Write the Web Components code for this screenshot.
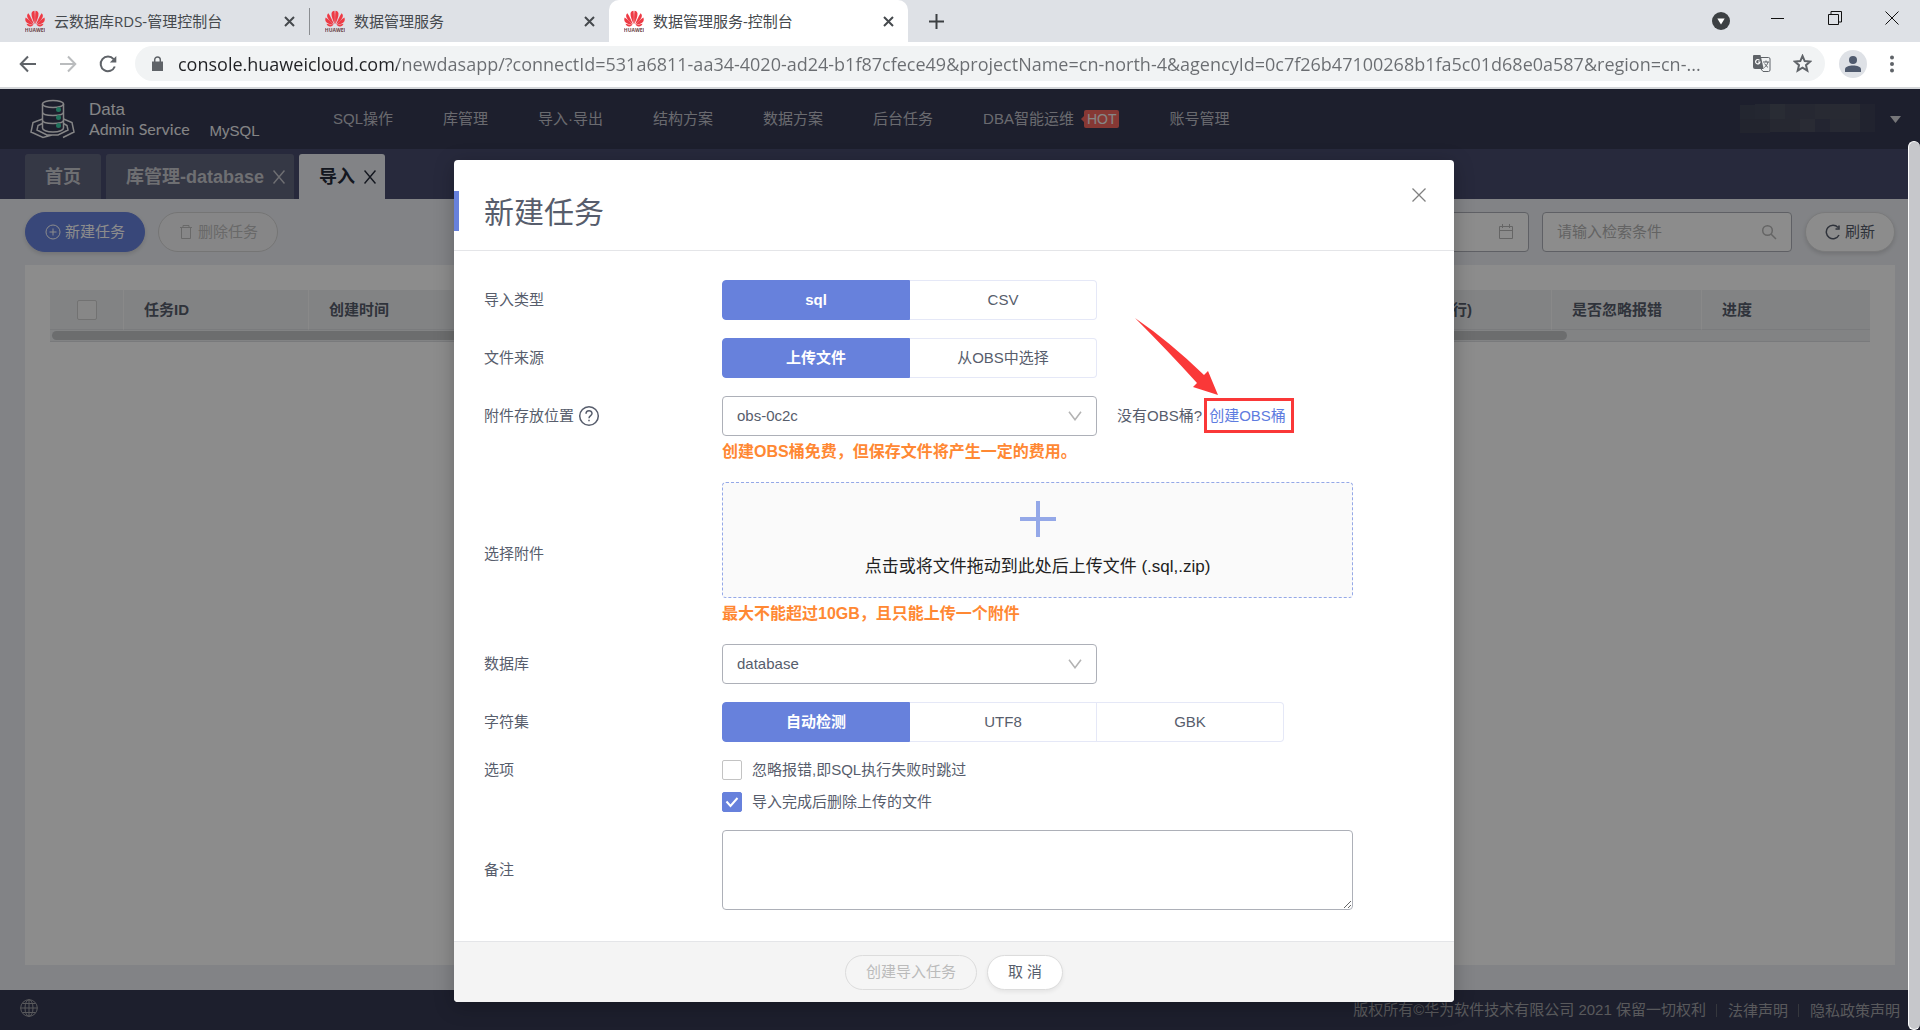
<!DOCTYPE html>
<html lang="zh-CN">
<head>
<meta charset="utf-8">
<title>数据管理服务-控制台</title>
<style>
  html, body { height: 100%; }
  body { margin: 0; overflow: hidden; font: 15px/20px "Liberation Sans", "Noto Sans CJK SC", sans-serif; }
</style>
</head>
<body>
<browser-window></browser-window>

<script>
const BASE = `<style>
  *, *::before, *::after { box-sizing: border-box; }
  button, input, select, textarea { font: inherit; color: inherit; margin: 0; }
  button { border: 0; padding: 0; background: none; display: flex; align-items: center; justify-content: center; }
  a { color: inherit; text-decoration: none; }
  svg { display: block; flex: none; }
  svg:not([fill]) { fill: none; }
  svg:not([stroke]) { stroke: currentColor; }
</style>`;

function define(name, html) {
  customElements.define(name, class extends HTMLElement {
    constructor() {
      super();
      this.attachShadow({ mode: 'open' }).innerHTML = BASE + html;
    }
  });
}

/* Eight-petal emblem used as the favicon of every tab */
define('huawei-mark', `
<style>:host { display: block; flex: none; }</style>
<svg width="20" height="22" viewBox="0 0 20 22" stroke="none" aria-hidden="true">
  <g fill="#ee3b45">
    <path d="M9.6 14.2C8 10.500 6.300 6.600 6.500 3.600 6.600 1.800 8 .8 9.500.7 10 5 10 9.500 9.600 14.200z"/>
    <path d="M10.400 14.200C12 10.500 13.700 6.600 13.500 3.600 13.400 1.800 12 .8 10.500.7 10 5 10 9.500 10.400 14.200z"/>
    <path d="M8.900 14.500C7.500 10.500 5.500 6.500 3.400 3.200 1.800 4.500 1.800 6.500 2.900 8.300 4.300 10.500 6.500 12.600 8.900 14.500z"/>
    <path d="M11.100 14.500C12.500 10.500 14.500 6.500 16.600 3.200 18.200 4.500 18.200 6.500 17.100 8.300 15.700 10.500 13.500 12.600 11.100 14.500z"/>
    <path d="M8.500 15C6.500 12.200 3.500 9.500.6 7.600-.1 9.600.3 11.700 2.300 13 4 14.100 6.200 14.600 8.500 15z"/>
    <path d="M11.500 15C13.500 12.200 16.500 9.500 19.400 7.600 20.100 9.600 19.700 11.700 17.700 13 16 14.100 13.800 14.600 11.500 15z"/>
    <path d="M8.300 15.500C6 14.900 3.800 14.300 1.500 13.800 2.300 15.800 3.800 16.700 5.600 16.400 6.600 16.200 7.500 15.900 8.300 15.500z"/>
    <path d="M11.700 15.500C14 14.900 16.200 14.300 18.500 13.800 17.700 15.800 16.200 16.700 14.400 16.400 13.400 16.200 12.500 15.900 11.700 15.500z"/>
  </g>
  <text x="10" y="21.500" font-size="5" font-weight="700" text-anchor="middle" fill="#6b4348">HUAWEI</text>
</svg>`);

define('browser-tab', `
<style>
  :host { display: flex; align-items: center; gap: 9px; width: 299px; height: 42px; padding: 0 12px 0 15px; color: #45494d; font: 15px/20px "Open Sans", "Noto Sans CJK SC", sans-serif; box-sizing: border-box; }
  :host([first]) { width: 310px; padding-left: 25px; border-right: 1px solid #8a8d91; border-image: linear-gradient(#0000 9px, #8a8d91 9px, #8a8d91 34px, #0000 34px) 1; }
  :host([active]) { background: #fff; border-radius: 10px 10px 0 0; }
  .title { flex: 1; white-space: nowrap; }
  button { width: 16px; height: 16px; }
</style>
<huawei-mark></huawei-mark>
<span class="title"><slot></slot></span>
<button aria-label="关闭标签页"><svg width="11" height="11" viewBox="0 0 11 11" stroke-width="2"><path d="M1 1l9 9M10 1l-9 9"/></svg></button>`);

define('browser-tabs', `
<style>
  :host { display: flex; align-items: center; height: 42px; background: #dee1e6; color: #3c4043; }
  .new { width: 28px; height: 28px; margin-left: 14px; }
  .sys { margin-left: auto; display: flex; align-items: center; color: #111; }
  .sys button { width: 57px; height: 42px; }
  .sys button:nth-child(n+2) { height: 36px; align-self: flex-start; }
</style>
<browser-tab first>云数据库RDS-管理控制台</browser-tab>
<browser-tab>数据管理服务</browser-tab>
<browser-tab active>数据管理服务-控制台</browser-tab>
<button class="new" aria-label="新标签页"><svg width="15" height="15" viewBox="0 0 15 15" stroke-width="2"><path d="M7.500 0v15M0 7.500h15"/></svg></button>
<div class="sys">
  <button aria-label="标签页搜索"><svg width="18" height="18" viewBox="0 0 18 18" stroke="none"><circle cx="9" cy="9" r="9" fill="#3c4043"/><path d="M5.300 6.500h7.400L9 12.500z" fill="#fff"/></svg></button>
  <button aria-label="最小化"><svg width="13" height="13" viewBox="0 0 13 13"><path d="M0 6.500h13"/></svg></button>
  <button aria-label="还原"><svg width="14" height="14" viewBox="0 0 14 14"><path d="M.5 3.500h10v10H.5zM3 3.500v-3h10.500v10.500h-3"/></svg></button>
  <button aria-label="关闭"><svg width="14" height="14" viewBox="0 0 14 14"><path d="M.5.5l13 13M13.500.5l-13 13"/></svg></button>
</div>`);

define('browser-toolbar', `
<style>
  :host { display: flex; align-items: center; height: 47px; padding: 0 18px 2px 19px; background: #fff; border-bottom: 2px solid #d5d7da; color: #5f6368; box-sizing: border-box; }
  .nav { width: 18px; height: 18px; margin-right: 22px; }
  .nav.off { color: #babcbe; }
  .omni { flex: 1; display: flex; align-items: center; height: 35px; margin: 0 14px 0 -4px; padding: 0 13px 0 17px; border-radius: 18px; background: #f1f3f4; min-width: 0; }
  input { flex: 1; min-width: 0; height: 35px; margin: 0 20px 0 15px; padding: 0; border: 0; outline: 0; font: 18px "Open Sans", sans-serif; color: #0000; background: linear-gradient(90deg, #202124 219px, #6a6d71 219px); -webkit-background-clip: text; background-clip: text; }
  .omni button + button { margin-left: 22px; }
  .me { width: 28px; height: 28px; border-radius: 50%; background: #dee1e6; margin-right: 15px; }
</style>
<button class="nav" aria-label="后退"><svg width="18" height="18" viewBox="0 0 18 18" stroke-width="2"><path d="M17 9H2M9 1.500L1.700 9 9 16.500"/></svg></button>
<button class="nav off" aria-label="前进"><svg width="18" height="18" viewBox="0 0 18 18" stroke-width="2"><path d="M1 9h15M9 1.500L16.300 9 9 16.500"/></svg></button>
<button class="nav" aria-label="重新加载"><svg width="18" height="18" viewBox="0 0 18 18" stroke-width="2"><path d="M15.800 11.500A7.300 7.300 0 1 1 14.600 4.200"/><path d="M17.300 1v6.500h-6.500z" fill="#5f6368" stroke="none"/></svg></button>
<div class="omni">
  <svg width="11" height="15" viewBox="0 0 11 15"><path d="M0 5.500h11V15H0z" fill="#5f6368" stroke="none"/><path d="M2.700 6V3.700a2.800 2.800 0 0 1 5.600 0V6" stroke-width="1.500"/></svg>
  <input type="text" aria-label="地址栏" value="console.huaweicloud.com/newdasapp/?connectId=531a6811-aa34-4020-ad24-b1f87cfece49&amp;projectName=cn-north-4&amp;agencyId=0c7f26b47100268b1fa5c01d68e0a587&amp;region=cn-...">
  <button aria-label="翻译此页"><svg width="19" height="19" viewBox="0 0 19 19"><path d="M1.500 1h7l3.200 14H3a2 2 0 0 1-2-2V1.500z" fill="#5f6368" stroke="none"/><path d="M8.500 3.500h8a1.500 1.500 0 0 1 1.500 1.500v11a1.500 1.500 0 0 1-1.500 1.500H11L9 15"/><path d="M7.500 6.300A2.200 2.200 0 1 0 8 8H6" stroke="#fff" stroke-width="1.200"/><path d="M11 8h6M14 6.500V8M16 8c-.6 2.500-2 4.300-3.700 5.500M12.600 9.500c.8 1.600 1.900 2.900 3.400 3.900"/></svg></button>
  <button aria-label="收藏"><svg width="19" height="19" viewBox="0 0 19 19" stroke-width="2"><path d="M9.500 2l2.200 5.100 5.500.5-4.200 3.600 1.300 5.400-4.800-2.900-4.800 2.900L6 11.200 1.800 7.600l5.500-.5z"/></svg></button>
</div>
<button class="me" aria-label="账户"><svg width="18" height="18" viewBox="0 0 18 18" stroke="none" fill="#4f5a6e"><circle cx="9" cy="5" r="4"/><path d="M1 17v-2.500C1 11.500 5 10.500 9 10.500s8 1 8 4V17z"/></svg></button>
<button aria-label="菜单"><svg width="20" height="18" viewBox="0 0 20 18" fill="#5f6368" stroke="none"><circle cx="10" cy="2.500" r="2"/><circle cx="10" cy="9" r="2"/><circle cx="10" cy="15.500" r="2"/></svg></button>`);

define('das-header', `
<style>
  :host { display: flex; align-items: center; height: 60px; padding: 0 19px 0 30px; background: #353952; color: #c1c2cb; }
  .brand { display: flex; align-items: center; color: #f2f2f4; width: 303px; }
  .name { margin-left: 14px; display: flex; flex-direction: column; font-size: 17px; line-height: 19px; white-space: nowrap; }
  .name span { font-family: Lato, sans-serif; font-size: 16px; }
  .engine { margin: 24px 0 0 20px; font-size: 15px; }
  nav { display: flex; align-items: center; gap: 50px; white-space: nowrap; }
  .hot { display: flex; align-items: center; gap: 10px; }
  em { position: relative; height: 18px; padding: 0 3px; border-radius: 2px; background: #f5675f; color: #f4f4f4; font: 14px/18px "Liberation Sans", sans-serif; }
  em::before { content: ""; position: absolute; left: -3px; top: 6px; border: 3px solid #0000; border-right-color: #f5675f; border-left: 0; }
  .user { margin-left: auto; gap: 15px; }
</style>
<div class="brand">
  <svg width="45" height="40" viewBox="0 0 45 40" stroke-width="1.500" aria-hidden="true">
    <ellipse cx="23" cy="5" rx="10.500" ry="3.500"/>
    <path d="M12.500 5v24c0 2 4 4 10.500 4s10.500-2 10.500-4V5M12.500 13c0 2 4 3.500 10.500 3.500S33.500 15 33.500 13M12.500 21c0 2 4 3.500 10.500 3.500S33.500 23 33.500 21"/>
    <path d="M12.500 20L3 23.500 1 33l12 5.500L22 36M33.500 20l8.500 3.500 2 9.500-11 5.500M12.500 24.500L8 26.500 7 31l10 5h11l10-5-1-4.500-3.500-2"/>
    <g fill="#3fd2a9" stroke="none"><circle cx="28.500" cy="10.500" r="2.500"/><circle cx="28.500" cy="18.500" r="2.500"/><circle cx="28.500" cy="26.500" r="2.500"/></g>
  </svg>
  <div class="name">Data<span>Admin Service</span></div>
  <span class="engine">MySQL</span>
</div>
<nav>
  <a href="#sql">SQL操作</a><a href="#db">库管理</a><a href="#io">导入·导出</a><a href="#schema">结构方案</a><a href="#data">数据方案</a><a href="#jobs">后台任务</a>
  <a href="#dba" class="hot">DBA智能运维<em>HOT</em></a><a href="#account">账号管理</a>
</nav>
<button class="user" aria-label="用户菜单">
  <svg width="135" height="30" viewBox="0 0 135 30" stroke="none" shape-rendering="crispEdges" aria-hidden="true">
    <path d="M0 1h15v14H0z" fill="#414558"/><path d="M15 0h15v15H15z" fill="#434759"/><path d="M30 0h15v15H30z" fill="#4c5060"/><path d="M45 0h30v15H45z" fill="#464a5b"/><path d="M75 0h45v15H75z" fill="#4a4d5d"/><path d="M120 0h15v28h-15z" fill="#3c4056"/>
    <path d="M0 15h30v14H0z" fill="#3e4254"/><path d="M30 15h30v13H30z" fill="#464a5a"/><path d="M60 15h15v13H60z" fill="#4b4f60"/><path d="M75 15h15v13H75z" fill="#404459"/><path d="M90 15h30v13H90z" fill="#484b5d"/>
  </svg>
  <svg width="11" height="7" viewBox="0 0 11 7" fill="#d8d8dc" stroke="none"><path d="M0 0h11L5.500 7z"/></svg>
</button>`);

define('page-tab', `
<style>
  :host { display: flex; align-items: center; gap: 9px; height: 45px; padding: 0 20px; border-radius: 3px 3px 0 0; background: #62667f; color: #c9cad0; font-size: 18px; font-weight: 700; white-space: nowrap; }
  :host([closable]) { padding-right: 9px; }
  :host([active]) { background: #edeff4; color: #252b3a; }
  button { display: none; }
  :host([closable]) button { display: flex; }
</style>
<slot></slot><button aria-label="关闭"><svg width="12" height="14" viewBox="0 0 12 14" stroke-width="1.500"><path d="M.5.5l11 13M11.500.5l-11 13"/></svg></button>`);

define('page-tabs', `
<style>:host { display: flex; align-items: flex-end; gap: 5px; height: 50px; padding: 0 25px; background: #474b6d; }</style>
<page-tab>首页</page-tab><page-tab closable>库管理-database</page-tab><page-tab closable active>导入</page-tab>`);

define('task-toolbar', `
<style>
  :host { display: flex; align-items: center; gap: 13px; color: #575d6c; }
  button { height: 40px; padding: 0 19px; gap: 4px; border: 1px solid #dedfe0; border-radius: 20px; background: #fff; box-shadow: 0 2px 4px #0002; white-space: nowrap; }
  .primary { background: #6781dc; border-color: #6781dc; color: #fff; }
  button:disabled { background: #f5f5f6; color: #bfbfbf; box-shadow: none; border-color: #d5d5d5; }
  .box { display: flex; align-items: center; width: 250px; height: 40px; padding: 0 14px; border: 1px solid #adb0b8; border-radius: 4px; background: #fff; color: #b8b8b8; }
  .box:first-of-type { margin-left: auto; }
  .box input { flex: 1; min-width: 0; border: 0; padding: 0; background: none; outline: 0; }
  .box input::placeholder { color: #b5b5b5; }
</style>
<button class="primary"><svg width="16" height="16" viewBox="0 0 16 16"><circle cx="8" cy="8" r="7"/><path d="M8 4.500v7M4.500 8h7"/></svg>新建任务</button>
<button disabled><svg width="16" height="16" viewBox="0 0 16 16"><path d="M2 3.500h12M5 3V1.500h6V3M3.500 4v10.500h9V4"/></svg>删除任务</button>
<label class="box"><input type="text" aria-label="日期范围"><svg width="16" height="16" viewBox="0 0 16 16"><path d="M1.500 2.500h13v12h-13zM1.500 6.500h13M4.500 0v4M11.500 0v4"/></svg></label>
<label class="box"><input type="text" aria-label="检索条件" placeholder="请输入检索条件"><svg width="16" height="16" viewBox="0 0 16 16" stroke-width="1.500"><circle cx="6.500" cy="6.500" r="4.800"/><path d="M10 10l5 5"/></svg></label>
<button><svg width="16" height="16" viewBox="0 0 16 16" stroke-width="1.500"><path d="M14 11A6.700 6.700 0 1 1 13 3.500M14 1.500V5h-3.500"/></svg>刷新</button>`);

define('task-table', `
<style>
  :host { display: block; border-bottom: 1px solid #dcdee2; background: #edeff1; }
  table { width: 100%; border-collapse: separate; border-spacing: 0; table-layout: fixed; }
  th { height: 40px; padding: 0 20px; text-align: left; white-space: nowrap; color: #575d6c; background: #edeff1; border-right: 1px solid #fafafa; border-bottom: 1px solid #dfe1e4; }
  th:first-child { text-align: center; }
  th:last-child { border-right: 0; }
  input { appearance: none; display: block; width: 20px; height: 20px; margin: 0 auto; border: 1px solid #cfcfcf; border-radius: 2px; background: #f6f6f6; }
  .bar { height: 11px; padding: 1px 2px; }
  .thumb { height: 9px; width: 83.4%; border-radius: 5px; background: #c5c6c9; }
</style>
<table>
  <colgroup><col style="width:74px"><col style="width:185px"><col><col style="width:125px"><col style="width:150px"><col style="width:168px"></colgroup>
  <thead><tr><th><input type="checkbox" aria-label="全选"></th><th>任务ID</th><th>创建时间</th><th>(行)</th><th>是否忽略报错</th><th>进度</th></tr></thead>
</table>
<div class="bar"><div class="thumb"></div></div>`);

define('das-footer', `
<style>
  :host { display: flex; align-items: center; height: 40px; padding: 0 20px; background: #353952; color: #a3a3a8; }
  svg { margin-bottom: 5px; }
  p { display: flex; align-items: center; margin: 0 0 0 auto; white-space: nowrap; }
  a { margin-left: 10px; padding-left: 11px; border-left: 1px solid #62646f; line-height: 13px; }
</style>
<svg width="18" height="18" viewBox="0 0 18 18" aria-label="语言"><circle cx="9" cy="9" r="8.300"/><ellipse cx="9" cy="9" rx="4" ry="8.300"/><path d="M9 .7v16.600M.7 9h16.600M2.500 4.500h13M2.500 13.500h13"/></svg>
<p>版权所有©华为软件技术有限公司 2021 保留一切权利<a href="#law">法律声明</a><a href="#privacy">隐私政策声明</a></p>`);

define('das-app', `
<style>
  :host { display: flex; flex-direction: column; position: relative; flex: 1; min-height: 0; background: #edeff4; }
  main { flex: 1; display: flex; flex-direction: column; gap: 13px; padding: 13px 25px 25px; }
  section { flex: 1; padding: 25px; background: #fff; }
  .mask { position: absolute; inset: 0; display: flex; justify-content: center; align-items: flex-start; padding: 71px 12px 0 0; background: rgba(0, 0, 0, .45); }
  .scroll { position: absolute; right: 0; top: 52px; bottom: 0; width: 12px; border: 1px solid #fff; border-width: 1px 0 1px 1px; border-radius: 6px; background: #c6c7cb; }
</style>
<das-header></das-header>
<page-tabs></page-tabs>
<main>
  <task-toolbar></task-toolbar>
  <section><task-table></task-table></section>
</main>
<das-footer></das-footer>
<div class="mask"><import-dialog></import-dialog></div>
<div class="scroll"></div>`);

/* One labelled line of the form; "top" keeps the label on the first control's line */
define('form-row', `
<style>
  :host { display: flex; align-items: center; }
  .label { flex: none; width: 238px; display: flex; align-items: center; }
  .control { flex: 1; min-width: 0; }
  :host([top]) { align-items: flex-start; }
  :host([top]) .label { min-height: var(--line, 40px); }
</style>
<div class="label"><slot name="label"></slot></div><div class="control"><slot></slot></div>`);

define('import-dialog', `
<style>
  :host { display: block; width: 1000px; border-radius: 4px; background: #fff; color: #575d6c; box-shadow: 0 4px 20px rgba(0, 0, 0, .25); }
  header { display: flex; align-items: center; height: 91px; border-bottom: 1px solid #e4e5e8; }
  h2 { flex: 1; height: 40px; margin: 12px 0 0; padding-left: 25px; border-left: 5px solid #6781dc; font-size: 30px; line-height: 44px; font-weight: 400; }
  header button { margin: 0 28px 20px 0; color: #808080; }
  form { display: flex; flex-direction: column; gap: 18px; padding: 29px 30px 31px; }
  .seg { display: flex; width: max-content; }
  .seg label { display: flex; align-items: center; justify-content: center; width: 187px; height: 40px; border: 1px solid #e5e8f7; border-left-width: 0; background: #fff; }
  .seg label:first-child { width: 188px; border-left-width: 1px; border-radius: 4px 0 0 4px; }
  .seg label:last-child { border-radius: 0 4px 4px 0; }
  .seg label:has(:checked) { background: #6781dc; border-color: #6781dc; color: #fff; font-weight: 700; }
  .seg input, .drop input { appearance: none; position: absolute; width: 0; height: 0; opacity: 0; }
  .line { display: flex; align-items: center; gap: 20px; white-space: nowrap; }
  .pick { display: flex; align-items: center; width: 375px; }
  select { appearance: none; width: 375px; height: 40px; padding: 0 14px; border: 1px solid #adb0b8; border-radius: 4px; background: #fff; }
  .pick svg { margin-left: -29px; color: #b3b3b3; pointer-events: none; }
  .help { margin-left: 4px; }
  .hint { height: 28px; margin: 0; font-size: 16px; line-height: 32px; font-weight: 700; color: #ff8833; white-space: nowrap; }
  .link { position: relative; color: #5e7ce0; margin-left: 3px; }
  .link::after { content: ""; position: absolute; inset: -9px -8px -9px -5px; border: 3px solid #fa3838; }
  .link svg { position: absolute; right: 67px; bottom: 28px; }
  .drop { display: flex; flex-direction: column; align-items: center; gap: 17px; width: 631px; height: 116px; padding-top: 18px; border: 1px dashed #94a8e8; border-radius: 4px; background: #fafafa; color: #222; font-size: 17px; line-height: 26px; }
  .opts { display: flex; flex-direction: column; gap: 12px; }
  .opts label { display: flex; align-items: center; gap: 10px; line-height: 20px; }
  .opts input { appearance: none; width: 20px; height: 20px; border: 1px solid #c3c3c3; border-radius: 2px; background: #fff; }
  .tick { display: grid; }
  .tick > * { grid-area: 1 / 1; place-self: center; }
  .tick svg { color: #fff; }
  .opts input:checked { background: #6781dc; border-color: #6781dc; }
  textarea { display: block; width: 631px; height: 80px; border: 1px solid #adb0b8; border-radius: 4px; background: #fff; }
  footer { display: flex; align-items: center; justify-content: center; gap: 10px; height: 61px; border-top: 1px solid #e4e5e8; border-radius: 0 0 4px 4px; background: #f4f4f4; }
  footer button { height: 35px; padding: 0 20px; border: 1px solid #dcdcdc; border-radius: 18px; background: #fff; box-shadow: 0 2px 4px #0001; }
  footer button:disabled { background: #f5f5f5; color: #bbb; box-shadow: none; }
</style>
<header>
  <h2>新建任务</h2>
  <button aria-label="关闭"><svg width="14" height="14" viewBox="0 0 14 14" stroke-width="1.300"><path d="M.5.5l13 13M13.500.5l-13 13"/></svg></button>
</header>
<form>
  <form-row><span slot="label">导入类型</span>
    <div class="seg" role="radiogroup" aria-label="导入类型">
      <label><input type="radio" name="type" checked>sql</label><label><input type="radio" name="type">CSV</label>
    </div>
  </form-row>
  <form-row><span slot="label">文件来源</span>
    <div class="seg" role="radiogroup" aria-label="文件来源">
      <label><input type="radio" name="source" checked>上传文件</label><label><input type="radio" name="source">从OBS中选择</label>
    </div>
  </form-row>
  <form-row top>
    <label slot="label" for="bucket">附件存放位置</label>
    <svg slot="label" class="help" width="22" height="22" viewBox="0 0 22 22" stroke-width="1.500" aria-hidden="true"><circle cx="11" cy="11" r="9.300"/><path d="M8 8.800c0-4 6-4 6-.3 0 2-3 2.200-3 4.700"/><path d="M11 14.800v1.500"/></svg>
    <div class="line">
      <div class="pick"><select id="bucket"><option>obs-0c2c</option></select><svg width="14" height="10" viewBox="0 0 14 10" stroke-width="1.500"><path d="M1 .8l6 8 6-8"/></svg></div>
      <span>没有OBS桶? <a class="link" href="#create">创建OBS桶<svg width="84" height="78" viewBox="0 0 84 78" fill="#fa3838" stroke="none" aria-hidden="true"><path d="M0 0Q35 24 69 57L73 53 83 77 58 69 62 65Q34 34 0 0z"/></svg></a></span>
    </div>
    <p class="hint">创建OBS桶免费，但保存文件将产生一定的费用。</p>
  </form-row>
  <form-row><label slot="label" for="file">选择附件</label>
    <label class="drop"><input id="file" type="file"><svg width="36" height="36" viewBox="0 0 36 36" stroke="#94a8e8" stroke-width="4"><path d="M18 0v36M0 18h36"/></svg>点击或将文件拖动到此处后上传文件 (.sql,.zip)</label>
    <p class="hint">最大不能超过10GB，且只能上传一个附件</p>
  </form-row>
  <form-row><label slot="label" for="db">数据库</label>
    <div class="pick"><select id="db"><option>database</option></select><svg width="14" height="10" viewBox="0 0 14 10" stroke-width="1.500"><path d="M1 .8l6 8 6-8"/></svg></div>
  </form-row>
  <form-row><span slot="label">字符集</span>
    <div class="seg" role="radiogroup" aria-label="字符集">
      <label><input type="radio" name="charset" checked>自动检测</label><label><input type="radio" name="charset">UTF8</label><label><input type="radio" name="charset">GBK</label>
    </div>
  </form-row>
  <form-row top style="--line:20px"><span slot="label">选项</span>
    <div class="opts">
      <label><input type="checkbox">忽略报错,即SQL执行失败时跳过</label>
      <label><span class="tick"><input type="checkbox" checked><svg width="14" height="12" viewBox="0 0 14 12" stroke-width="2"><path d="M1.500 5.500l4 4.500 7-8"/></svg></span>导入完成后删除上传的文件</label>
    </div>
  </form-row>
  <form-row><label slot="label" for="note">备注</label><textarea id="note"></textarea></form-row>
</form>
<footer><button disabled>创建导入任务</button><button>取 消</button></footer>`);

define('browser-window', `
<style>:host { display: flex; flex-direction: column; height: 100vh; }</style>
<browser-tabs></browser-tabs>
<browser-toolbar></browser-toolbar>
<das-app></das-app>`);
</script>
</body>
</html>
